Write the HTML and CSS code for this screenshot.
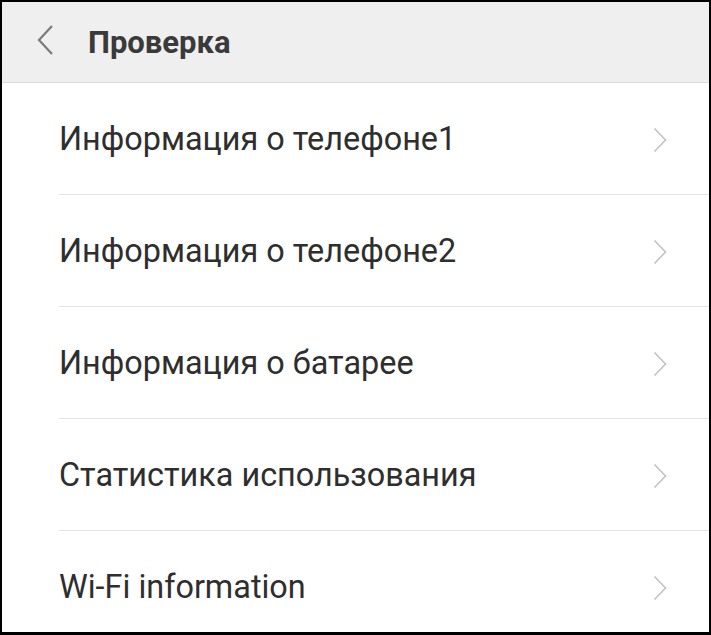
FILE: index.html
```html
<!DOCTYPE html>
<html lang="ru">

<head>
    <meta charset="UTF-8">
    <meta name="viewport" content="width=device-width, initial-scale=1.0">
    <title>Проверка</title>
    <link rel="stylesheet" href="styles.css">
</head>

<body>
    <div class="screen">
        <header class="topbar">
            <svg class="back" width="18" height="32" viewBox="0 0 18 32">
                <path d="M16 2 L3 16 L16 30" fill="none" stroke="#7a7a7a" stroke-width="2.2" />
            </svg>
            <h1>Проверка</h1>
        </header>

        <!-- Menu list -->
        <ul class="menu">
            <li>
                <span>Информация о телефоне1</span>
                <svg class="arrow" width="14" height="26" viewBox="0 0 14 26">
                    <path d="M1.5 1.5 L12.5 13 L1.5 24.5" fill="none" stroke="#c2c2c2" stroke-width="1.6" />
                </svg>
            </li>
            <li>
                <span>Информация о телефоне2</span>
                <svg class="arrow" width="14" height="26" viewBox="0 0 14 26">
                    <path d="M1.5 1.5 L12.5 13 L1.5 24.5" fill="none" stroke="#c2c2c2" stroke-width="1.6" />
                </svg>
            </li>
            <li>
                <span>Информация о батарее</span>
                <svg class="arrow" width="14" height="26" viewBox="0 0 14 26">
                    <path d="M1.5 1.5 L12.5 13 L1.5 24.5" fill="none" stroke="#c2c2c2" stroke-width="1.6" />
                </svg>
            </li>
            <li>
                <span>Статистика использования</span>
                <svg class="arrow" width="14" height="26" viewBox="0 0 14 26">
                    <path d="M1.5 1.5 L12.5 13 L1.5 24.5" fill="none" stroke="#c2c2c2" stroke-width="1.6" />
                </svg>
            </li>
            <li>
                <span>Wi-Fi information</span>
                <svg class="arrow" width="14" height="26" viewBox="0 0 14 26">
                    <path d="M1.5 1.5 L12.5 13 L1.5 24.5" fill="none" stroke="#c2c2c2" stroke-width="1.6" />
                </svg>
            </li>
        </ul>
    </div>
</body>

</html>
```

FILE: styles.css
```css
body {
    margin: 0;
    padding: 0;
    font-family: Roboto, "Noto Sans", Arial, sans-serif;
    background: #000;
}

.screen {
    box-sizing: border-box;
    width: 711px;
    height: 635px;
    border: 2px solid #000;
    border-bottom-width: 3px;
    background: #fff;
    overflow: hidden;
}

.topbar {
    height: 80px;
    background: #eeefee;
    border-bottom: 1px solid #dcdcdc;
    display: flex;
    align-items: center;
    padding-left: 34px;
}

.back {
    margin-top: -4px;
}

.topbar h1 {
    margin: 0 0 0 34px;
    font-size: 31px;
    font-weight: bold;
    color: #3a3a3a;
}

.menu {
    list-style: none;
    margin: 0;
    padding: 0;
}

.menu li {
    height: 111px;
    margin-left: 57px;
    padding-right: 42px;
    border-bottom: 1px solid #e4e4e4;
    display: flex;
    justify-content: space-between;
    align-items: center;
    font-size: 32.4px;
    color: #2e2e2e;
}

.arrow {
    margin-top: 2px;
}
```
